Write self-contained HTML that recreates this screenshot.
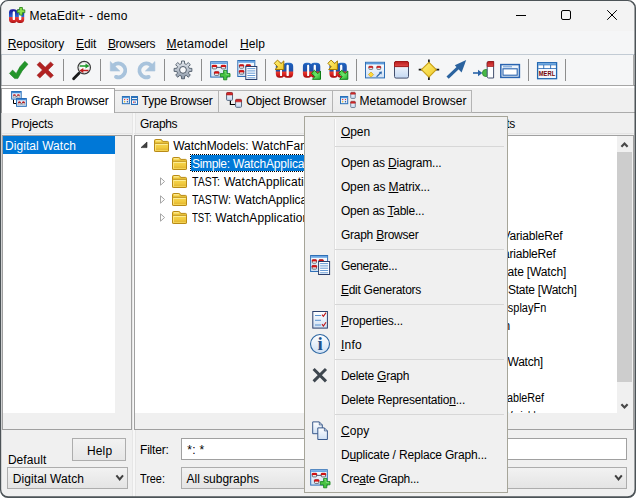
<!DOCTYPE html>
<html><head><meta charset="utf-8"><title>MetaEdit+ - demo</title>
<style>
html,body{margin:0;padding:0;background:#fff;}
body{width:636px;height:498px;overflow:hidden;position:relative;font-family:"Liberation Sans",sans-serif;font-size:12px;color:#000;}
#content{position:absolute;left:0;top:0;width:636px;height:498px;border-radius:8px;background:#f0f0f0;overflow:hidden;}
#content div,#content span,#content svg{position:absolute}
.t{white-space:nowrap;line-height:14px;font-size:12px;}
u{text-decoration:underline;text-underline-offset:1px;text-decoration-thickness:1px}
#title{left:0;top:0;width:636px;height:31px;background:#f3f3f3}
#menubar{left:0;top:31px;width:636px;height:23.5px;background:#f5f6f7}
#tbline{left:0;top:54px;width:636px;height:1px;background:#c2cbd4}
#toolbar{left:0;top:55px;width:636px;height:30px;background:#f5f6f7}
#tbline2{left:0;top:85px;width:636px;height:1px;background:#a6a6a6}
#tabgap{left:0;top:86px;width:636px;height:1.5px;background:#fff}
.sep{width:1px;top:59px;height:22px;background:#8d8d8d}
.tab{top:90px;height:23px;background:linear-gradient(#f2f2f2,#ececec);border:1px solid #b4b4b4;box-sizing:border-box}
.tabact{top:88px;height:25px;background:#fff;border:1px solid #a6a6a6;border-bottom:none;box-sizing:border-box}
.frame{border:1px solid #a0a0a0;box-sizing:border-box;background:#f0f0f0}
.white{background:#fff}
.sel{background:#0078d7}
.combo{border:1px solid #adadad;box-sizing:border-box;background:linear-gradient(#f2f2f2,#e4e4e4)}
.btn{border:1px solid #adadad;box-sizing:border-box;background:linear-gradient(#f2f2f2,#e7e7e7)}
#menu{left:304px;top:116px;width:204px;height:377px;background:#f0f0f0;border:1px solid #a6a599;box-sizing:border-box;}
.msep{left:335px;width:169px;height:1px;background:#d7d7d7}
</style></head><body>
<div id="content">
<div id="title"></div>
<div id="menubar"></div>
<div id="tbline"></div>
<div id="toolbar"></div>
<div id="tbline2"></div>
<div id="tabgap"></div>
<span class="t" style="top:8.84px;left:29.50px;letter-spacing:0.185px;">MetaEdit+ - demo</span>
<span class="t" style="top:36.84px;left:7.80px;letter-spacing:-0.108px;"><u>R</u>epository</span>
<span class="t" style="top:36.84px;left:76.00px;letter-spacing:-0.101px;"><u>E</u>dit</span>
<span class="t" style="top:36.84px;left:107.90px;letter-spacing:-0.341px;"><u>B</u>rowsers</span>
<span class="t" style="top:36.84px;left:166.60px;letter-spacing:0.225px;"><u>M</u>etamodel</span>
<span class="t" style="top:36.84px;left:240.10px;letter-spacing:0.053px;"><u>H</u>elp</span>
<!--TOOLBAR-->
<div style="left:633px;top:55px;width:1px;height:30px;background:#ababab"></div>
<div style="left:1.3px;top:55px;width:0.8px;height:30px;background:#c4c8cc"></div>
<div class="sep" style="left:63px"></div>
<div class="sep" style="left:100px"></div>
<div class="sep" style="left:164px"></div>
<div class="sep" style="left:201px"></div>
<div class="sep" style="left:265px"></div>
<div class="sep" style="left:356px"></div>
<div class="sep" style="left:528px"></div>
<div class="sep" style="left:565px"></div>

<!--TABS-->
<div style="left:0;top:112px;width:636px;height:1px;background:#ababab"></div>
<div class="tab" style="left:114px;width:105px"></div>
<div class="tab" style="left:218px;width:115px"></div>
<div class="tab" style="left:332px;width:140px"></div>
<div class="tabact" style="left:1px;width:114px"></div>
<!--TABICONS-->
<span class="t" style="top:93.84px;left:31.00px;letter-spacing:-0.246px;">Graph Browser</span>
<span class="t" style="top:93.84px;left:141.70px;letter-spacing:-0.213px;">Type Browser</span>
<span class="t" style="top:93.84px;left:246.30px;letter-spacing:-0.167px;">Object Browser</span>
<span class="t" style="top:93.84px;left:359.50px;letter-spacing:0.017px;">Metamodel Browser</span>
<!--PANES-->
<div style="left:131.6px;top:113px;width:2.8px;height:385px;background:#f7f7f7;border-left:0.6px solid #e6e6e6;border-right:0.6px solid #e6e6e6"></div>
<div style="left:2px;top:133px;width:130px;height:1px;background:#e4e4e4"></div><div style="left:134px;top:133px;width:200px;height:1px;background:#e4e4e4"></div><div style="left:480px;top:133px;width:154px;height:1px;background:#e4e4e4"></div>
<div class="frame" style="left:2px;top:135px;width:130px;height:295px"></div>
<div class="white" style="left:3px;top:136px;width:112px;height:277px"></div>
<div class="sel" style="left:3px;top:136px;width:112px;height:17.5px"></div>
<div class="frame" style="left:134px;top:135px;width:200px;height:295px"></div>
<div class="white" style="left:135px;top:136px;width:180px;height:277px"></div>
<div class="sel" style="left:191px;top:155px;width:120px;height:15.8px"></div>
<div style="left:190px;top:154px;width:120px;height:1px;background:repeating-linear-gradient(90deg,#000 0 1px,#fff 1px 2px)"></div>
<div style="left:190px;top:170.8px;width:120px;height:1px;background:repeating-linear-gradient(90deg,#000 0 1px,#fff 1px 2px)"></div>
<div style="left:190px;top:154px;width:1px;height:17.8px;background:repeating-linear-gradient(180deg,#000 0 1px,#fff 1px 2px)"></div>
<div class="frame" style="left:480px;top:135px;width:154px;height:295px"></div>
<div class="white" style="left:481px;top:136px;width:136px;height:277px"></div>
<div style="left:617px;top:136px;width:15px;height:277px;background:#f0f0f0"></div>
<div style="left:617px;top:152px;width:15px;height:230px;background:#cdcdcd"></div>
<!--TREEICONS-->
<span class="t" style="top:117.04px;left:11.20px;letter-spacing:-0.195px;">Projects</span>
<span class="t" style="top:117.04px;left:140.00px;letter-spacing:-0.360px;">Graphs</span>
<span class="t" style="top:117.04px;right:120.90px;letter-spacing:-0.250px;">Contents</span>
<span class="t" style="top:138.84px;left:5.10px;letter-spacing:0.050px;color:#fff">Digital Watch</span>
<span class="t" style="top:138.84px;left:173.20px;letter-spacing:-0.024px;">WatchModels:</span>
<span class="t" style="top:138.84px;left:252.10px;letter-spacing:0.089px;">WatchFamily</span>
<span class="t" style="top:156.84px;left:192.00px;letter-spacing:-0.331px;color:#fff">Simple:</span>
<span class="t" style="top:156.84px;left:233.10px;letter-spacing:-0.143px;color:#fff">WatchApplication</span>
<span class="t" style="top:174.84px;left:191.70px;transform:scaleX(0.8747);transform-origin:left center;">TAST:</span>
<span class="t" style="top:174.84px;left:223.90px;letter-spacing:0.072px;">WatchApplication</span>
<span class="t" style="top:192.84px;left:191.70px;transform:scaleX(0.8794);transform-origin:left center;">TASTW:</span>
<span class="t" style="top:192.84px;left:234.40px;letter-spacing:-0.005px;">WatchApplication</span>
<span class="t" style="top:210.84px;left:191.70px;transform:scaleX(0.7985);transform-origin:left center;">TST:</span>
<span class="t" style="top:210.84px;left:215.20px;letter-spacing:0.114px;">WatchApplication</span>
<span class="t" style="top:228.54px;right:73.70px;letter-spacing:-0.190px;">clockTime: VariableRef</span>
<span class="t" style="top:246.54px;right:80.30px;letter-spacing:-0.190px;">sysTime: VariableRef</span>
<span class="t" style="top:264.54px;right:69.90px;letter-spacing:-0.141px;">Start [Watch]: State [Watch]</span>
<span class="t" style="top:282.54px;right:59.50px;letter-spacing:-0.230px;">Show: State [Watch]</span>
<span class="t" style="top:300.54px;right:90.20px;transform:scaleX(0.9136);transform-origin:right center;">Time: DisplayFn</span>
<span class="t" style="top:318.54px;right:126.20px;letter-spacing:-0.250px;">: Action</span>
<span class="t" style="top:354.54px;right:93.10px;letter-spacing:-0.250px;">Stop [Watch]</span>
<span class="t" style="top:390.54px;right:91.50px;transform:scaleX(0.8967);transform-origin:right center;">clockTime: VariableRef</span>
<span class="t" style="top:408.54px;right:95.00px;transform:scaleX(0.8043);transform-origin:right center;">clockOffset: Variable</span>
<div style="left:481px;top:413px;width:152px;height:16px;background:#f0f0f0"></div>
<!--BOTTOM-->
<div class="btn" style="left:72px;top:438px;width:54px;height:23px"></div>
<div class="combo" style="left:7px;top:467px;width:121px;height:22px"></div>
<div class="white" style="left:181px;top:438px;width:446px;height:22px;border:1px solid #a0a0a0;box-sizing:border-box"></div>
<div class="combo" style="left:181px;top:467px;width:446px;height:22px"></div>
<!--BOTTOMICONS-->
<span class="t" style="top:444.04px;left:86.90px;letter-spacing:0.178px;">Help</span>
<span class="t" style="top:453.24px;left:7.90px;letter-spacing:0.053px;">Default</span>
<span class="t" style="top:471.54px;left:12.70px;letter-spacing:0.088px;">Digital Watch</span>
<span class="t" style="top:443.04px;left:140.00px;letter-spacing:-0.186px;">Filter:</span>
<span class="t" style="top:443.04px;left:187.20px;letter-spacing:0.321px;">*: *</span>
<span class="t" style="top:471.54px;left:140.00px;transform:scaleX(0.9034);transform-origin:left center;">Tree:</span>
<span class="t" style="top:471.54px;left:186.50px;letter-spacing:-0.009px;">All subgraphs</span>
<svg width="636" height="498" viewBox="0 0 636 498" style="left:0;top:0">
<defs>
<linearGradient id="gBR" x1="0" y1="0" x2="0" y2="13.8" gradientUnits="userSpaceOnUse">
<stop offset="0" stop-color="#1c1496"/><stop offset="0.25" stop-color="#2136b0"/><stop offset="0.55" stop-color="#2f6ad2"/><stop offset="0.6" stop-color="#e23c3c"/><stop offset="0.85" stop-color="#d02626"/><stop offset="1" stop-color="#a01010"/></linearGradient>
<linearGradient id="gFold" x1="0" y1="0" x2="0" y2="1"><stop offset="0" stop-color="#f8d84e"/><stop offset="1" stop-color="#e8bc30"/></linearGradient>
<linearGradient id="gObj" x1="0" y1="0" x2="0" y2="1"><stop offset="0" stop-color="#ffffff"/><stop offset="1" stop-color="#c4d8f2"/></linearGradient>
<linearGradient id="gRed" x1="0" y1="0" x2="0" y2="1"><stop offset="0" stop-color="#b81c1c"/><stop offset="1" stop-color="#e04848"/></linearGradient>
<linearGradient id="gWin" x1="0" y1="0" x2="0" y2="1"><stop offset="0" stop-color="#ffffff"/><stop offset="1" stop-color="#cfe0f4"/></linearGradient>
<linearGradient id="gGear" x1="0" y1="0" x2="0" y2="1"><stop offset="0" stop-color="#e4e8ee"/><stop offset="1" stop-color="#8c98a8"/></linearGradient>
<linearGradient id="gGreen" x1="0" y1="0" x2="1" y2="1"><stop offset="0" stop-color="#3cc83c"/><stop offset="0.5" stop-color="#6ee46a"/><stop offset="1" stop-color="#22ac2a"/></linearGradient>
<linearGradient id="gYel" x1="0" y1="0" x2="1" y2="1"><stop offset="0" stop-color="#fff27a"/><stop offset="1" stop-color="#f0c828"/></linearGradient>
<!-- logo: 15.2 x 13.8 -->
<linearGradient id="gBRL" x1="0" y1="0" x2="0" y2="15" gradientUnits="userSpaceOnUse">
<stop offset="0" stop-color="#2f74cc"/><stop offset="0.12" stop-color="#1d5cb8"/><stop offset="0.56" stop-color="#1f50a8"/><stop offset="0.6" stop-color="#ea3c2c"/><stop offset="0.8" stop-color="#d22020"/><stop offset="1" stop-color="#a00606"/></linearGradient>
<symbol id="logoL" viewBox="0 0 17.4 15" overflow="visible">
<path fill-rule="evenodd" fill="url(#gBRL)" d="M3.6 0 H5.2 Q8.8 0 8.8 3.6 V10.8 Q8.8 15 5.2 15 H3.6 Q0 15 0 10.8 V3.6 Q0 0 3.6 0 Z M4.4 2.9 V12.4 Q4.4 13.3 5.3 13.3 Q6.2 13.3 6.2 12.4 V2.9 Q6.2 2 5.3 2 Q4.4 2 4.4 2.9 Z"/>
<path fill-rule="evenodd" fill="url(#gBRL)" d="M11.2 0 H13.8 Q17.4 0 17.4 3.6 V10.8 Q17.4 15 13.8 15 H11.2 Q7.6 15 7.6 10.8 V3.6 Q7.6 0 11.2 0 Z M10.9 2.9 V12.4 Q10.9 13.3 11.85 13.3 Q12.8 13.3 12.8 12.4 V2.9 Q12.8 2 11.85 2 Q10.9 2 10.9 2.9 Z"/>
<path d="M4.4 2.9 V12.4 Q4.4 13.3 5.3 13.3 Q6.2 13.3 6.2 12.4 V2.9 Q6.2 2 5.3 2 Q4.4 2 4.4 2.9 Z M10.9 2.9 V12.4 Q10.9 13.3 11.85 13.3 Q12.8 13.3 12.8 12.4 V2.9 Q12.8 2 11.85 2 Q10.9 2 10.9 2.9 Z" fill="#fff"/>
</symbol>
<symbol id="logo" viewBox="0 0 15.2 13.8" overflow="visible">
<path fill-rule="evenodd" fill="url(#gBR)" d="M3.4 0 H4.8 Q8.2 0 8.2 3.4 V10.4 Q8.2 13.8 4.8 13.8 H3.4 Q0 13.8 0 10.4 V3.4 Q0 0 3.4 0 Z M3.8 3.2 V10 Q3.8 10.8 4.6 10.8 H5.1 Q5.9 10.8 5.9 10 V3.2 Q5.9 2.4 5.1 2.4 H4.6 Q3.8 2.4 3.8 3.2 Z"/>
<path fill-rule="evenodd" fill="url(#gBR)" d="M10.4 0 H11.8 Q15.2 0 15.2 3.4 V10.4 Q15.2 13.8 11.8 13.8 H10.4 Q7 13.8 7 10.4 V3.4 Q7 0 10.4 0 Z M9.9 3.2 V10 Q9.9 10.8 10.7 10.8 H11.4 Q12.2 10.8 12.2 10 V3.2 Q12.2 2.4 11.4 2.4 H10.7 Q9.9 2.4 9.9 3.2 Z"/>
<path d="M3.8 3.2 V10 Q3.8 10.8 4.6 10.8 H5.1 Q5.9 10.8 5.9 10 V3.2 Q5.9 2.4 5.1 2.4 H4.6 Q3.8 2.4 3.8 3.2 Z M9.9 3.2 V10 Q9.9 10.8 10.7 10.8 H11.4 Q12.2 10.8 12.2 10 V3.2 Q12.2 2.4 11.4 2.4 H10.7 Q9.9 2.4 9.9 3.2 Z" fill="#fff"/>
</symbol>
<!-- folder 15x13 -->
<symbol id="folder" viewBox="0 0 15 13" overflow="visible">
<path d="M0.5 1.6 Q0.5 0.5 1.6 0.5 H6.8 Q7.7 0.5 8.1 1.3 L8.6 2.4 H13.5 Q14.5 2.4 14.5 3.4 V12 H0.5 Z" fill="#f3ce40" stroke="#b88a16" stroke-width="1"/>
<rect x="1.9" y="1.3" width="4.9" height="1" fill="#fff3ae"/>
<rect x="0.5" y="4.3" width="14" height="8.2" rx="0.9" fill="url(#gFold)" stroke="#b88a16" stroke-width="1"/>
<path d="M1.3 5.4 H13.7" stroke="#fff2a6" stroke-width="0.9"/>
<path d="M1.5 5.4 V11.6" stroke="#fce98a" stroke-width="0.8"/>
<path d="M1.9 10.3 H13.7" stroke="#d8a822" stroke-width="0.6"/>
<path d="M1.9 11.3 H13.7" stroke="#f8de6a" stroke-width="0.8"/>
</symbol>
<!-- small object (red top) 7 x 9 -->
<symbol id="obj" viewBox="0 0 7 9" overflow="visible">
<rect x="0.5" y="0.5" width="6" height="8" rx="1" fill="url(#gObj)" stroke="#566880" stroke-width="1"/>
<path d="M0.5 3 L0.5 1.5 Q0.5 0.5 1.5 0.5 L5.5 0.5 Q6.5 0.5 6.5 1.5 L6.5 3 Z" fill="#d02828" stroke="#b01c1c" stroke-width="0.6"/>
</symbol>
<!-- tiny node (red top) 4x4 -->
<symbol id="node" viewBox="0 0 5 4.2" overflow="visible">
<rect x="0.4" y="0.4" width="4.2" height="3.4" rx="0.7" fill="#fff" stroke="#454b56" stroke-width="0.8"/>
<path d="M0.1 1.9 L0.1 1 Q0.1 0.1 1 0.1 L4 0.1 Q4.9 0.1 4.9 1 L4.9 1.9 Z" fill="#dc1212" stroke="#b00c0c" stroke-width="0.3"/>
</symbol>
<!-- create-graph window with plus: 20 x 18.5 -->
<symbol id="cgraph" viewBox="0 0 20 18.5" overflow="visible">
<rect x="0.5" y="0.5" width="16.6" height="15.4" fill="url(#gWin)" stroke="#2f6fb6" stroke-width="1"/>
<rect x="1" y="1" width="15.6" height="1.8" fill="#6aa6e4"/>
<path d="M6 6.2 H11" stroke="#3c4c6c" stroke-width="0.9" fill="none"/>
<use href="#node" x="1.7" y="3.8" width="5.1" height="4.3"/>
<use href="#node" x="10.7" y="3.8" width="5.1" height="4.3"/>
<use href="#node" x="3.9" y="10.2" width="5.1" height="4.4"/>
<path d="M13.4 9.2 L16.6 9.2 L16.6 12.4 L19.8 12.4 L19.8 15.6 L16.6 15.6 L16.6 18.6 L13.4 18.6 L13.4 15.6 L10.2 15.6 L10.2 12.4 L13.4 12.4 Z" fill="#48c444" stroke="#1c8820" stroke-width="0.9"/>
<path d="M14.2 10.2 H15.8 V13.2 H18.8" stroke="#8ee888" stroke-width="0.7" fill="none"/>
</symbol>
<!-- generate icon 20 x 20 -->
<symbol id="gen" viewBox="0 0 20 20" overflow="visible">
<rect x="0.5" y="0.5" width="17" height="16" fill="url(#gWin)" stroke="#2f6fb6" stroke-width="1"/>
<rect x="1" y="1" width="16" height="1.8" fill="#6aa6e4"/>
<use href="#node" x="1.7" y="4.5" width="5.1" height="4.1"/>
<use href="#node" x="8.5" y="4.5" width="5.1" height="4.1"/>
<use href="#node" x="1.7" y="10.2" width="5.1" height="4.3"/>
<rect x="8.5" y="6.5" width="11" height="13" fill="#fdfeff" stroke="#2b3f6c" stroke-width="1"/>
<path d="M10 8.6 H18 M10 10.9 H18 M10 13.2 H18 M10 15.5 H18 M10 17.8 H18" stroke="#4a86cc" stroke-width="0.85"/>
</symbol>
<!-- yellow arrow pointing down-right 10x10 -->
<symbol id="yarr" viewBox="0 0 10 10" overflow="visible">
<path d="M0.2 3.4 L3.4 0.2 L7 3.6 L9.7 1 L9.7 9.6 L0.9 9.6 L3.6 7 Z" fill="url(#gYel)" stroke="#a87c00" stroke-width="1" stroke-linejoin="round"/>
</symbol>
<symbol id="garr" viewBox="0 0 9.4 9.4" overflow="visible">
<path d="M0.2 3.1 L3.1 0.2 L6.6 3.5 L9.2 0.9 L9.2 9.2 L1.1 9.2 L3.5 6.6 Z" fill="url(#gGreen)" stroke="#0c7c14" stroke-width="1" stroke-linejoin="round"/>
</symbol>
<!-- tiny window 11x9 (tab icon) -->
<symbol id="twin" viewBox="0 0 11 9" overflow="visible">
<rect x="0.5" y="0.5" width="10" height="8" fill="#e4eefa" stroke="#2169b6" stroke-width="1"/>
<rect x="1" y="1" width="9" height="1.3" fill="#3f86d2"/>
<path d="M4.6 5.9 H6.4" stroke="#303848" stroke-width="0.8"/>
<path d="M1.9 5 A1.55 1.55 0 0 1 5 5 Z M6 5 A1.55 1.55 0 0 1 9.1 5 Z" fill="#cc1010"/>
<path d="M2.1 5 H4.8 V6.9 H2.1 Z M6.2 5 H8.9 V6.9 H6.2 Z" fill="#fff" stroke="#6a7686" stroke-width="0.5"/>
<path d="M1.9 5 H5 M6 5 H9.1" stroke="#a80c0c" stroke-width="0.5"/>
</symbol>
</defs>
<!-- title icon -->
<use href="#logo" x="9" y="9.2" width="15.2" height="13.8"/>
<path d="M19.6 7.5 H22.4 V9.9 H24.8 V12.7 H22.4 V15.1 H19.6 V12.7 H17.2 V9.9 H19.6 Z" fill="#8ee04a" stroke="#2c8a1e" stroke-width="0.9"/>
<!-- caption buttons -->
<path d="M516 15.5 H526" stroke="#000" stroke-width="1"/>
<rect x="561.5" y="10.5" width="9" height="9" rx="1.5" fill="none" stroke="#000" stroke-width="1"/>
<path d="M607.2 10.2 L616.8 19.8 M616.8 10.2 L607.2 19.8" stroke="#000" stroke-width="1"/>
<!-- toolbar: check -->
<path d="M9.4 73.4 L12.6 70 L16.2 73.4 Q19.5 66 24.8 61.2 L28 64.2 Q21.5 70.5 17.8 78.6 L14.6 78.6 Z" fill="#23962a" stroke="#1a7a20" stroke-width="0.5"/>
<!-- X -->
<path d="M39.8 61.9 L45.2 67.2 L50.6 61.9 L53.4 64.7 L48 70 L53.4 75.3 L50.6 78.1 L45.2 72.8 L39.8 78.1 L37 75.3 L42.4 70 L37 64.7 Z" fill="#b22222" stroke="#941818" stroke-width="0.5"/>
<!-- magnifier -->
<path d="M79 73.2 L73.6 78.8" stroke="#1a1a1a" stroke-width="2.8" stroke-linecap="round"/>
<circle cx="84.2" cy="67.6" r="6.2" fill="#fafafa" stroke="#3c3c3c" stroke-width="1.3"/>
<circle cx="84.2" cy="67.6" r="5.1" fill="none" stroke="#d0d0d0" stroke-width="0.8"/>
<path d="M79.8 65.3 H85.5 V63.6 L89.4 66 L85.5 68.4 V66.7 H79.8 Z" fill="#1e9a28"/>
<path d="M88.4 69.8 H83.3 V68.1 L79.4 70.5 L83.3 72.9 V71.2 H88.4 Z" fill="#c01c1c"/>
<!-- undo -->
<g fill="none" stroke="#a8c3dc" stroke-width="3.8" stroke-linecap="round">
<path d="M113.8 65.2 A6.9 6.9 0 1 1 116 76.9"/>
<path d="M150.9 65.2 A6.9 6.9 0 1 0 148.7 76.9"/>
</g>
<path d="M110.3 61.6 L110.3 71 L119.8 71 Z" fill="#a8c3dc" stroke="#a8c3dc" stroke-width="0.6" stroke-linejoin="round"/>
<path d="M154.9 61.6 L154.9 71 L145.4 71 Z" fill="#a8c3dc" stroke="#a8c3dc" stroke-width="0.6" stroke-linejoin="round"/>
<!-- gear -->
<g transform="translate(183,69.9)">
<g fill="url(#gGear)" stroke="#4e5a68" stroke-width="0.9" stroke-linejoin="round">
<path id="gearp" d="M-1.60 -6.20 L-1.49 -8.88 L1.49 -8.88 L1.60 -6.20 L3.25 -5.51 L5.23 -7.33 L7.33 -5.23 L5.51 -3.25 L6.20 -1.60 L8.88 -1.49 L8.88 1.49 L6.20 1.60 L5.51 3.25 L7.33 5.23 L5.23 7.33 L3.25 5.51 L1.60 6.20 L1.49 8.88 L-1.49 8.88 L-1.60 6.20 L-3.25 5.51 L-5.23 7.33 L-7.33 5.23 L-5.51 3.25 L-6.20 1.60 L-8.88 1.49 L-8.88 -1.49 L-6.20 -1.60 L-5.51 -3.25 L-7.33 -5.23 L-5.23 -7.33 L-3.25 -5.51 Z"/>
</g>
<circle r="3.4" fill="#f7f8fa" stroke="#4e5a68" stroke-width="1"/>
</g>
<!-- create graph -->
<use href="#cgraph" x="210.2" y="61.2" width="20" height="18.5"/>
<!-- generate -->
<use href="#gen" x="237.3" y="60" width="20" height="20"/>
<!-- import / export -->
<use href="#logoL" x="275.8" y="62.8" width="17.4" height="15"/>
<use href="#yarr" x="274.1" y="59.9" width="10" height="10"/>
<use href="#logoL" x="302.9" y="62.8" width="17.4" height="15"/>
<use href="#garr" x="311.3" y="70.1" width="9.4" height="9.4"/>
<use href="#logoL" x="329.4" y="62.8" width="17.4" height="15"/>
<use href="#yarr" x="327.7" y="59.9" width="10" height="10"/>
<use href="#garr" x="338.6" y="70.1" width="9.4" height="9.4"/>
<!-- graph tool window -->
<rect x="365.5" y="62.3" width="19" height="15.6" fill="url(#gWin)" stroke="#2f6fb6" stroke-width="1"/>
<rect x="366" y="62.8" width="18" height="1.6" fill="#5b9bdd"/>
<use href="#node" x="368.6" y="65.6" width="4.4" height="4.6"/>
<use href="#node" x="376.6" y="65.6" width="4.4" height="4.6"/>
<path d="M371 72 L373.6 74.6 L371 77.2 L368.4 74.6 Z" fill="#ffd83a" stroke="#c89a10" stroke-width="0.6"/>
<path d="M376.6 76.8 L380.4 73" stroke="#2a64a8" stroke-width="1.2"/>
<path d="M382 71.4 L381.4 74.6 L378.8 72 Z" fill="#2a64a8"/>
<!-- object -->
<rect x="394.5" y="61.5" width="14" height="16.6" rx="1.6" fill="url(#gObj)" stroke="#43506e" stroke-width="1"/>
<path d="M394.5 66.6 V63 Q394.5 61.5 396 61.5 H407 Q408.5 61.5 408.5 63 V66.6 Z" fill="url(#gRed)" stroke="#a01818" stroke-width="1"/>
<!-- diamond -->
<path d="M428.9 59.4 V63 M428.9 76.4 V80 M418.7 69.7 H422.2 M435.6 69.7 H439.2" stroke="#181818" stroke-width="1.7"/>
<path d="M428.9 62.3 L436.3 69.7 L428.9 77.1 L421.5 69.7 Z" fill="url(#gYel)" stroke="#c8a018" stroke-width="1.2" stroke-linejoin="round"/>
<!-- arrow -->
<path d="M447.6 77.6 L459.5 66.4" stroke="#2b639f" stroke-width="3.2"/>
<path d="M466.2 60 L461.6 72.4 L454.8 65.2 Z" fill="#2b639f"/>
<!-- port -->
<path d="M473 73 H479" stroke="#2a64a8" stroke-width="1.6"/>
<path d="M478 69.8 L482.4 73 L478 76.2 Z" fill="#2a64a8"/>
<circle cx="486" cy="73" r="3.6" fill="#48b848" stroke="#2a8a2a" stroke-width="0.8"/>
<path d="M493.6 61.5 H488.6 Q487.2 61.5 487.2 63 V76.6 Q487.2 78 488.6 78 H493.6 Z" fill="#fdfeff" stroke="#43506e" stroke-width="1"/>
<path d="M493.6 61.5 H488.6 Q487.2 61.5 487.2 63 V66.4 H493.6 Z" fill="url(#gRed)" stroke="#a01818" stroke-width="0.8"/>
<!-- window icon -->
<rect x="500.8" y="64.6" width="18.6" height="12.8" fill="#eef4fb" stroke="#2a64b0" stroke-width="1.5"/>
<path d="M503 66.8 H512" stroke="#5a8fd0" stroke-width="0.9"/>
<rect x="503" y="68.8" width="14.2" height="6.4" fill="#fff" stroke="#2a64b0" stroke-width="1.1"/>
<!-- MERL -->
<rect x="537.6" y="62.7" width="19" height="16" fill="#f4f8fd" stroke="#2368b2" stroke-width="1.3"/>
<rect x="538.2" y="63.3" width="17.8" height="1.6" fill="#5a9cdc"/>
<rect x="538.2" y="64.8" width="17.8" height="4.2" fill="#2a6ab4"/>
<rect x="538.4" y="65.3" width="4.9" height="2.9" fill="#fff"/><rect x="544.2" y="65.3" width="6" height="2.9" fill="#fff"/><rect x="551.1" y="65.3" width="4.8" height="2.9" fill="#fff"/>
<text x="547" y="75.9" font-family="Liberation Sans, sans-serif" font-weight="bold" font-size="7.4" fill="#760404" text-anchor="middle" textLength="16.4" lengthAdjust="spacingAndGlyphs">MERL</text>
<!-- tab icons: graph browser -->
<path d="M13.5 99.5 V103.5 H16.5" stroke="#000" stroke-width="1" fill="none"/>
<use href="#twin" x="11" y="91" width="10.8" height="8.6"/>
<use href="#twin" x="16" y="98" width="10.9" height="8.8"/>
<!-- type browser -->
<rect x="122.4" y="96.5" width="7" height="7.2" fill="#eaf2fb" stroke="#2a70b8" stroke-width="1"/>
<rect x="122.9" y="97" width="6" height="1.2" fill="#4d8fd6"/>
<circle cx="124.6" cy="99.6" r="0.7" fill="#e02020"/><circle cx="127.4" cy="99.6" r="0.7" fill="#e02020"/><circle cx="124.6" cy="101.8" r="0.7" fill="#e0b010"/><circle cx="127.4" cy="101.8" r="0.7" fill="#2050a0"/>
<rect x="131" y="96" width="7" height="9" fill="#2a70b8"/>
<rect x="132" y="98" width="5" height="0.9" fill="#fff"/>
<rect x="132" y="100.4" width="5" height="3.4" fill="#fff"/>
<rect x="133" y="101.6" width="1.5" height="1.1" fill="#e02020"/><rect x="134.5" y="101.6" width="1.5" height="1.1" fill="#2a60c0"/>
<!-- object browser -->
<path d="M230.4 100.5 V104.5 H235" stroke="#000" stroke-width="1.2" fill="none"/>
<use href="#obj" x="226" y="92" width="7.1" height="8.9"/>
<use href="#obj" x="235" y="98.9" width="7.1" height="8.9"/>
<!-- metamodel browser -->
<rect x="340.5" y="96.5" width="7.2" height="7.2" fill="#eaf2fb" stroke="#2a70b8" stroke-width="1"/>
<rect x="341" y="97" width="6.2" height="1.2" fill="#4d8fd6"/>
<circle cx="342.7" cy="99.6" r="0.7" fill="#e02020"/><circle cx="345.5" cy="99.6" r="0.7" fill="#e02020"/><circle cx="342.7" cy="101.8" r="0.7" fill="#e0b010"/><circle cx="345.5" cy="101.8" r="0.7" fill="#2050a0"/>
<use href="#obj" x="350" y="92" width="6" height="6.8"/>
<use href="#obj" x="350" y="101" width="6" height="6.9"/>
<!-- tree icons -->
<path d="M141 147.6 H147 V142 Z" fill="#404040" stroke="#262626" stroke-width="0.6"/>
<use href="#folder" x="154" y="139" width="15" height="13"/>
<use href="#folder" x="172" y="157" width="15" height="13"/>
<use href="#folder" x="172" y="175" width="15" height="13"/>
<use href="#folder" x="172" y="193" width="15" height="13"/>
<use href="#folder" x="172" y="211" width="15" height="13"/>
<path d="M160.5 177.8 V185.2 L164.6 181.5 Z M160.5 195.8 V203.2 L164.6 199.5 Z M160.5 213.8 V221.2 L164.6 217.5 Z" fill="#fff" stroke="#a6a6a6" stroke-width="1"/>
<!-- scrollbar arrows -->
<path d="M621.4 146.8 L624.5 143.6 L627.6 146.8" fill="none" stroke="#484848" stroke-width="2.2"/>
<path d="M621.4 404.2 L624.5 407.4 L627.6 404.2" fill="none" stroke="#484848" stroke-width="2.2"/>
<!-- combo arrows -->
<path d="M116.4 475.4 L119.7 479.4 L123 475.4" fill="none" stroke="#404040" stroke-width="2"/>
<path d="M615.2 475.4 L618.5 479.4 L621.8 475.4" fill="none" stroke="#404040" stroke-width="2"/>

</svg>

<!--MENU-->
<div id="menu"></div>
<div style="left:334px;top:119px;width:1px;height:371px;background:#e0e0e0"></div>
<div style="left:335px;top:119px;width:1px;height:371px;background:#fdfdfd"></div>
<div class="msep" style="top:146px"></div>
<div class="msep" style="top:249px"></div>
<div class="msep" style="top:304px"></div>
<div class="msep" style="top:359px"></div>
<div class="msep" style="top:414px"></div>
<svg width="636" height="498" viewBox="0 0 636 498" style="left:0;top:0">
<use href="#gen" x="310" y="255" width="20.2" height="20"/>
<!-- properties -->
<rect x="312.8" y="311.5" width="14.6" height="16.6" fill="url(#gWin)" stroke="#2b3f6c" stroke-width="1"/>
<path d="M315 315.5 H321 M315 320.3 H321 M315 325 H321" stroke="#4a86c8" stroke-width="0.9"/>
<path d="M322 314.6 L323.4 316.4 L326 312.6 M322 324.2 L323.4 326 L326 322.2" fill="none" stroke="#c01818" stroke-width="1.1"/>
<!-- info -->
<circle cx="320" cy="344" r="9.5" fill="url(#gWin)" stroke="#2a64a0" stroke-width="1.1"/>
<text x="320.1" y="350.2" font-family="Liberation Serif, serif" font-weight="bold" font-size="19" fill="#1f528c" text-anchor="middle">i</text>
<!-- delete X -->
<path d="M313.6 369 L326 381.4 M326 369 L313.6 381.4" stroke="#3e464e" stroke-width="3"/>
<!-- copy -->
<path d="M312.7 421.9 H319.3 L322.3 424.9 V433.7 H312.7 Z" fill="url(#gWin)" stroke="#3a5a8c" stroke-width="1"/>
<path d="M317.8 427.9 H324.4 L327.4 430.9 V439.5 H317.8 Z" fill="url(#gWin)" stroke="#3a5a8c" stroke-width="1"/>
<path d="M319.3 421.9 V424.9 H322.3 M324.4 427.9 V430.9 H327.4" fill="none" stroke="#3a5a8c" stroke-width="0.8"/>
<!-- create graph -->
<use href="#cgraph" x="310.2" y="469.2" width="20" height="18.5"/>
</svg>

<span class="t" style="top:124.84px;left:340.90px;letter-spacing:-0.019px;"><u>O</u>pen</span>
<span class="t" style="top:155.84px;left:340.90px;letter-spacing:-0.192px;">Open as <u>D</u>iagram...</span>
<span class="t" style="top:179.84px;left:340.90px;letter-spacing:-0.134px;">Open as <u>M</u>atrix...</span>
<span class="t" style="top:203.84px;left:340.90px;letter-spacing:-0.237px;">Open as <u>T</u>able...</span>
<span class="t" style="top:227.84px;left:340.90px;letter-spacing:-0.240px;">Graph <u>B</u>rowser</span>
<span class="t" style="top:258.84px;left:340.90px;letter-spacing:-0.341px;">Gene<u>r</u>ate...</span>
<span class="t" style="top:282.84px;left:340.90px;letter-spacing:-0.257px;"><u>E</u>dit Generators</span>
<span class="t" style="top:313.84px;left:340.90px;letter-spacing:-0.201px;"><u>P</u>roperties...</span>
<span class="t" style="top:337.84px;left:340.90px;letter-spacing:0.242px;"><u>I</u>nfo</span>
<span class="t" style="top:368.84px;left:340.90px;letter-spacing:-0.259px;">Delete <u>G</u>raph</span>
<span class="t" style="top:392.84px;left:340.90px;letter-spacing:-0.218px;">Delete Representatio<u>n</u>...</span>
<span class="t" style="top:423.84px;left:340.90px;letter-spacing:0.142px;"><u>C</u>opy</span>
<span class="t" style="top:447.84px;left:340.90px;letter-spacing:-0.167px;">D<u>u</u>plicate / Replace Graph...</span>
<span class="t" style="top:471.84px;left:340.90px;letter-spacing:-0.302px;">Cre<u>a</u>te Graph...</span>
</div>
<svg id="frame" width="636" height="498" viewBox="0 0 636 498" style="position:absolute;left:0;top:0"><path fill-rule="evenodd" fill="#4c5357" d="M8 0 H628 A8 8 0 0 1 636 8 V490 A8 8 0 0 1 628 498 H8 A8 8 0 0 1 0 490 V8 A8 8 0 0 1 8 0 Z M8.2 1.1 H627.5 A7 7 0 0 1 634.5 8.1 V489.3 A7 7 0 0 1 627.5 496.3 H8.2 A7 7 0 0 1 1.2 489.3 V8.1 A7 7 0 0 1 8.2 1.1 Z"/></svg>
</body></html>
